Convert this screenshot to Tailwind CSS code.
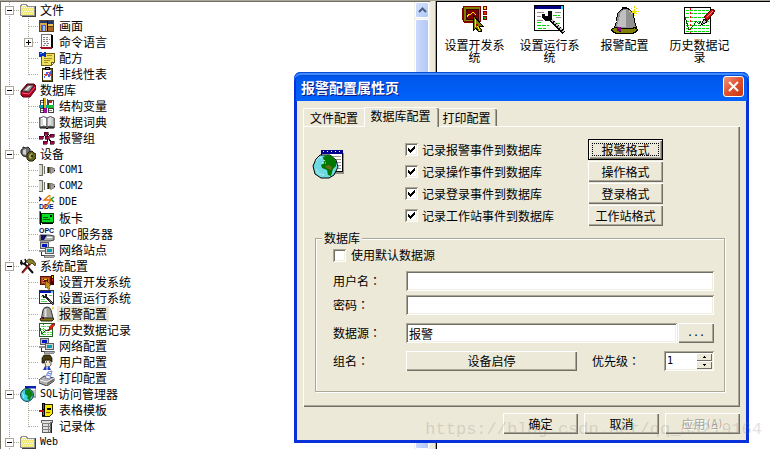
<!DOCTYPE html>
<html lang="zh-CN">
<head>
    <meta charset="UTF-8">
    <meta name="viewport" content="width=device-width, initial-scale=1.0">
    <title>报警配置属性页</title>
    <script src="https://cdn.jsdelivr.net/npm/@tailwindcss/browser@4"></script>
    <script>
        document.addEventListener("DOMContentLoaded", () => {
            const tree = [
                { name: "文件", icon: "folder", children: [
                    { name: "画面", icon: "picture" },
                    { name: "命令语言", icon: "script", closed: true },
                    { name: "配方", icon: "recipe" },
                    { name: "非线性表", icon: "clipboard" }
                ] },
                { name: "数据库", icon: "redbook", children: [
                    { name: "结构变量", icon: "struct" },
                    { name: "数据词典", icon: "openbook" },
                    { name: "报警组", icon: "group" }
                ] },
                { name: "设备", icon: "gears", children: [
                    { name: "COM1", icon: "plug" },
                    { name: "COM2", icon: "plug" },
                    { name: "DDE", icon: "dde" },
                    { name: "板卡", icon: "card" },
                    { latin: "OPC", name: "服务器", icon: "opc" },
                    { name: "网络站点", icon: "network" }
                ] },
                { name: "系统配置", icon: "tools", children: [
                    { name: "设置开发系统", icon: "develop" },
                    { name: "设置运行系统", icon: "runtime" },
                    { name: "报警配置", icon: "bell", selected: true },
                    { name: "历史数据记录", icon: "history" },
                    { name: "网络配置", icon: "network" },
                    { name: "用户配置", icon: "user" },
                    { name: "打印配置", icon: "printer" }
                ] },
                { latin: "SQL", name: "访问管理器", icon: "globe", children: [
                    { name: "表格模板", icon: "template" },
                    { name: "记录体", icon: "record" }
                ] },
                { name: "Web", icon: "folder", children: [] }
            ];

            const list = document.getElementById("tree");
            const dots = 'stroke="#aca899" stroke-dasharray="1 1"';

            // 一格引导线:竖线、横线、展开框
            function guide(down, across, box) {
                let lines = "";
                if (down) lines += `<path d="M8.5 0V${down}" ${dots}/>`;
                if (across) lines += `<path d="M9 8.5H19" ${dots}/>`;
                if (box) {
                    lines += '<path d="M4.5 4.5h8v8h-8z" fill="#fff" stroke="#aca899"/><path d="M6 8.5h5" stroke="#000"/>';
                    if (box === "plus") lines += '<path d="M8.5 6v5" stroke="#000"/>';
                }
                return `<svg class="w-[19px] h-4 shrink-0" viewBox="0 0 19 16" fill="none" shape-rendering="crispEdges" aria-hidden="true">${lines}</svg>`;
            }

            function addRow(node, guides) {
                const row = document.createElement("li");
                row.className = "flex h-4 items-center";
                const pill = node.selected ? "bg-[#ece9d8]" : "";
                const ascii = /^[A-Za-z0-9]+$/.test(node.name);
                const latin = ascii ? node.name : node.latin || "";
                const text = ascii ? "" : node.name;
                row.innerHTML = guides +
                    `<svg class="size-4 shrink-0" aria-hidden="true"><use href="#${node.icon}"/></svg>` +
                    `<a href="#" class="ml-[2px] flex items-center px-[2px] leading-4 whitespace-nowrap ${pill}">` +
                    (latin ? `<span class="font-['DejaVu_Sans_Mono',monospace] text-[10px]">${latin}</span>` : "") +
                    `${text}</a>`;
                list.appendChild(row);
            }

            tree.forEach((parent) => {
                addRow(parent, guide(16, true, "minus"));
                parent.children.forEach((child, c) => {
                    const last = c === parent.children.length - 1;
                    addRow(child, guide(16, false) + guide(last ? 9 : 16, true, child.closed ? "plus" : ""));
                });
            });
        });
    </script>
</head>
<body class="h-screen overflow-hidden bg-[#ece9d8] font-['Noto_Sans_CJK_SC',sans-serif] text-[12px] leading-4 text-black">
    <!-- 图标 -->
    <svg class="hidden" aria-hidden="true">
        <symbol id="folder" viewBox="0 0 16 16" shape-rendering="crispEdges">
            <path d="M2 4h14v11H2z" fill="#404040"/><path d="M.5 4.500l1-2h5l1 2h7v9H.500z" fill="#f0e878" stroke="#909090"/>
            <path d="M2 5.500h12M3 7.500h11M2 9.500h12M3 11.500h11" stroke="#fffff0" stroke-dasharray="1 1"/><path d="M2 3.500h4" stroke="#fff"/>
        </symbol>
        <symbol id="picture" viewBox="0 0 16 16" shape-rendering="crispEdges">
            <path d="M0 2h15v12H0z" fill="#604020"/><path d="M1 3h13v3H1z" fill="#203870"/><path d="M1 5h7v8H1z" fill="#d8a848"/>
            <path d="M2 7h5v6H2z" fill="#4060e0"/><path d="M4 8h2v5H4z" fill="#a0c0ff"/><path d="M9 6h5v2H9z" fill="#e8c060"/><path d="M9 9h5v4H9z" fill="#a86828"/><path d="M8 3h1v10H8z" fill="#000"/>
        </symbol>
        <symbol id="script" viewBox="0 0 16 16" shape-rendering="crispEdges">
            <path d="M2.500.5h10v13h-10z" fill="#fff" stroke="#707070"/><path d="M12 1h2v13h-2z" fill="#000"/><path d="M1 13h12v2H2z" fill="#a01020"/>
            <path d="M4 3.500h6M4 5.500h7M4 7.500h5M5 9.500h6M4 11.500h5" stroke="#808080" stroke-dasharray="2 1"/>
        </symbol>
        <symbol id="recipe" viewBox="0 0 16 16" shape-rendering="crispEdges">
            <path d="M2.500 3.500h13v9l-3 3h-10z" fill="#f0e060" stroke="#706010"/><path d="M12 15v-3h3" fill="#fff" stroke="#706010"/>
            <path d="M0 2h3v1h2V2h2v5H5V6H3v1H0z" fill="#0030c0"/><path d="M1 3h2v1H1z" fill="#60a0ff"/><path d="M8 5.500h5M5 8.500h8M5 10.500h6M5 12.500h4" stroke="#a89020"/>
        </symbol>
        <symbol id="clipboard" viewBox="0 0 16 16" shape-rendering="crispEdges">
            <path d="M3 2h10v13H3z" fill="#706020" stroke="#302800"/><path d="M4 4h8v10H4z" fill="#fff"/><path d="M6 1h4v2H6z" fill="#909090" stroke="#000"/>
            <path d="M5 12l3-6 2 5 2-6" fill="none" stroke="#4060f0"/><path d="M5 8l2 2 3-4 2 4" fill="none" stroke="#e04040"/>
        </symbol>
        <symbol id="redbook" viewBox="0 0 16 16">
            <path d="M1 9L7 2h7l2 2v3l-6 8H3L1 13z" fill="#b00020" stroke="#500010"/><path d="M2 9l6-6h6l-5 7z" fill="#909090" stroke="#202020" stroke-width=".7"/>
            <path d="M5 8l4-4h2L7 8z" fill="#f0f0f0"/><path d="M2 11l7 1 6-7" fill="none" stroke="#f06080"/>
        </symbol>
        <symbol id="struct" viewBox="0 0 16 16" shape-rendering="crispEdges">
            <path d="M1 2h5v5H1zM9 2h5v5H9zM1 10h5v4H1zM9 10h5v4H9z" fill="#fff" stroke="#404040"/>
            <path d="M2 4h3M10 4h3M2 12h3M10 12h3" stroke="#808080"/><path d="M0 7h8v3H0z" fill="#00a0b0"/><path d="M8 7h7v3H8z" fill="#10c030"/>
            <path d="M5 0h2v10H5z" fill="#e0b000"/><path d="M5 10h3v5H5z" fill="#a010a0"/><path d="M10 3h3v2h-3z" fill="#d02020"/><path d="M4 0v15M8 1v6" stroke="#000" stroke-width=".7"/>
        </symbol>
        <symbol id="openbook" viewBox="0 0 16 16">
            <path d="M0 4h1v10h6l1 1 1-1h6V4" fill="#606060" stroke="#000"/><path d="M1 4q4-3 7 0v9q-3-2-7 0z" fill="#fff" stroke="#505050"/><path d="M15 4q-4-3-7 0v9q3-2 7 0z" fill="#e0e0e0" stroke="#505050"/>
            <path d="M3 5v6M13 5v6" stroke="#b0b0b0"/>
        </symbol>
        <symbol id="group" viewBox="0 0 16 16" shape-rendering="crispEdges">
            <path d="M8 4L3 7M8 4l5 3M8 4v8M9 8l4 5" stroke="#000"/><path d="M5 2h4v3H5zM0 6h4v3H0zM6 6h4v3H6zM11 4h4v3h-4zM4 11h4v3H4zM11 11h4v3h-4z" fill="#a00848" stroke="#300018" stroke-width=".6"/>
        </symbol>
        <symbol id="gears" viewBox="0 0 16 16">
            <path d="M1 4l2-1V1l3 1 2-1 2 2v6l-3 2-4-1-2-3z" fill="#707070" stroke="#202020"/><path d="M3 4l3-1v6L3 8z" fill="#d0d0d0"/>
            <path d="M7 8l2-2 3-1 2 2 2 1v4l-3 3H9l-2-2z" fill="#606020" stroke="#202000"/><path d="M9 9l3-2 1 3-2 3-2-1z" fill="#a8a060"/><path d="M11 9h2v2h-2z" fill="#303000"/>
        </symbol>
        <symbol id="plug" viewBox="0 0 16 16" shape-rendering="crispEdges">
            <path d="M0 2h4v12H0z" fill="#d8d8c8"/><path d="M0 2.500h4M0 13.500h4" stroke="#606058"/><path d="M3.500 2v12M5.500 4v8" stroke="#707068"/><path d="M4 4h1v8H4z" fill="#e8e8e0"/>
            <path d="M8 5h3v6H8z" fill="#807820"/><path d="M9.500 5v6" stroke="#302800"/><path d="M11 5h2v1h2v4h-2v1h-2z" fill="#a0a0a0" stroke="#606060" stroke-width=".6"/><path d="M15 8h1" stroke="#000"/>
        </symbol>
        <symbol id="dde" viewBox="0 0 16 16">
            <path d="M0 3l2 2-2 2" fill="none" stroke="#1010a0" stroke-width="1.400"/><path d="M15 3l-3 2 3 3" fill="none" stroke="#109030" stroke-width="1.400"/>
            <text x="0" y="15" font-family="Liberation Sans" font-size="7" font-weight="bold" fill="#101070">DDE</text>
            <path d="M11 1L5 6h7L5 15" fill="none" stroke="#e87000" stroke-width="1.300"/><path d="M11 1v6" stroke="#e0a000"/>
        </symbol>
        <symbol id="card" viewBox="0 0 16 16" shape-rendering="crispEdges">
            <path d="M0 1h2v13H0z" fill="#808080"/><path d="M1 2v13" stroke="#000"/><path d="M2.500 3.500h12v9h-12z" fill="#00e020" stroke="#004008"/>
            <path d="M4 7.500h5M4 9.500h7" stroke="#006010"/><path d="M11 5h2v2h-2z" fill="#000"/><path d="M3 13h11v1H3z" fill="#000"/>
        </symbol>
        <symbol id="opc" viewBox="0 0 16 16">
            <text x="0" y="7" font-family="Liberation Sans" font-size="7" font-weight="bold" fill="#101060">OPC</text>
            <path d="M1 9h9l5 1v4l-4 1H1z" fill="#b0b0b0" stroke="#404040"/><path d="M2 9h6l-3 5H2z" fill="#101060"/><path d="M8 11h5v1H8z" fill="#fff"/>
        </symbol>
        <symbol id="network" viewBox="0 0 16 16" shape-rendering="crispEdges">
            <path d="M1.500.5h8v6h-8z" fill="#c0c0c0" stroke="#606060"/><path d="M3 2h5v3H3z" fill="#0018c0"/><path d="M0 8h8v2H0z" fill="#909090"/><path d="M2 10v3h4" fill="none" stroke="#303030"/>
            <path d="M6.500 5.500h8v6h-8z" fill="#d0d0d0" stroke="#606060"/><path d="M8 7h5v3H8z" fill="#00a0b0"/><path d="M5 13h10v2H5z" fill="#b0b0b0" stroke="#404040" stroke-width=".6"/>
        </symbol>
        <symbol id="tools" viewBox="0 0 16 16">
            <path d="M13 15L4 5" stroke="#101010" stroke-width="2"/><path d="M1 2l1 3 2 1 2-2-1-3M0 4l2 3" fill="none" stroke="#101010" stroke-width="1.500"/>
            <path d="M2 15l8-9" stroke="#a02020" stroke-width="2"/><path d="M2 14l8-9" stroke="#000" stroke-width=".6"/><path d="M6 3l3-2 4 1 3 4-1 2-3-3-2 2z" fill="#88802c" stroke="#202000" stroke-width=".7"/>
        </symbol>
        <symbol id="develop" viewBox="0 0 16 16" shape-rendering="crispEdges">
            <path d="M1 2h10v8H1z" fill="#b04020" stroke="#601000"/><path d="M3 4h6v4H3z" fill="#600808" stroke="#e08040" stroke-width=".7"/><path d="M4 7l2-2 2 1" stroke="#f0d000" fill="none"/>
            <path d="M12 1h3v10h-3z" fill="#400"/><path d="M13 2h1v2h-1z" fill="#f0d000"/><path d="M13 5h1v2h-1z" fill="#f02020"/><path d="M7 7l5 4-2 1 1 3-2 0-1-2-2 1z" fill="#c09820" stroke="#604800" stroke-width=".6"/>
        </symbol>
        <symbol id="runtime" viewBox="0 0 16 16" shape-rendering="crispEdges">
            <path d="M.5.5h14v13H.500z" fill="#fff" stroke="#303030"/><path d="M1 1h11v2H1z" fill="#0018b0"/><path d="M12 1h2v2h-2z" fill="#60d0ff"/><path d="M2 6h3M2 9h4M10 5h3M2 11h6" stroke="#60d060"/>
            <path d="M4 5l1 2h2V4M6 6l9 9" fill="none" stroke="#202020" stroke-width="2"/><path d="M10 10l5 5" stroke="#909090" stroke-width=".8"/>
        </symbol>
        <symbol id="bell" viewBox="0 0 16 16">
            <path d="M1 13l2-2h10l2 2-2 2H2z" fill="#807010" stroke="#202000"/><path d="M2.500 12l1.500-8q1-3 4-3t4 3l2 8z" fill="#a0a098" stroke="#303030"/><path d="M6.500 3v8" stroke="#e0e0e0" stroke-width="2"/><path d="M3 11h2v2H3z" fill="#600060"/><path d="M13 1l2 1-2 1" stroke="#e0d020" fill="none"/>
        </symbol>
        <symbol id="history" viewBox="0 0 16 16" shape-rendering="crispEdges">
            <path d="M.5 1.500h13v13H.500z" fill="#fff" stroke="#206020"/><path d="M2 4.500h11M2 7.500h10M2 10.500h11M2 12.500h11" stroke="#60e060" stroke-dasharray="2 1"/><path d="M4 2v12" stroke="#e04040" stroke-dasharray="1 1"/>
            <path d="M1 6l2 6 4-4 2 1" stroke="#106010" fill="none"/><path d="M9 9l2-5 4-3 1 1-3 5z" fill="#e02010" stroke="#601010" stroke-width=".6"/>
        </symbol>
        <symbol id="user" viewBox="0 0 16 16">
            <path d="M5 6h7v5l-2 2H7z" fill="#f0e8d0" stroke="#202020" stroke-width=".7"/><path d="M3 9V4l2-3h6l2 3v4l-2-2H6l-1 3z" fill="#483c10" stroke="#100800" stroke-width=".7"/><path d="M7 8h1M10 8h1" stroke="#000"/><path d="M6 12l2 2 2-2 2 4H4z" fill="#1838c0"/><path d="M8 13v3" stroke="#e8f0ff"/>
        </symbol>
        <symbol id="printer" viewBox="0 0 16 16">
            <path d="M0 10l5-4 10 2v3l-7 5-8-3z" fill="#b0b0b0" stroke="#404040"/><path d="M1 10l7 2 7-4" fill="none" stroke="#f0f0f0"/><path d="M6 8l3-6 4-1-2 8z" fill="#f0f4ff" stroke="#6070b0" stroke-width=".8"/><path d="M9 3l3 1M8 5l3 1" stroke="#4060e0" stroke-width=".8"/><path d="M8 13l6-4v2l-6 4z" fill="#707070"/>
        </symbol>
        <symbol id="globe" viewBox="0 0 16 16">
            <path d="M6 1h10v10H6z" fill="#fff" stroke="#606060"/><path d="M5 0h11v2.500H5z" fill="#0820b0"/><path d="M12 5h3M12 7h3M12 9h3" stroke="#909090"/>
            <circle cx="7" cy="9" r="6.400" fill="#40d0e8" stroke="#103040"/><path d="M5 4l4-1 3 3 1 3-2 2-1 4-3-3 1-2-3-2z" fill="#108010"/><path d="M2 7l2 3-1 2" stroke="#a0f0f8" fill="none"/>
        </symbol>
        <symbol id="template" viewBox="0 0 16 16" shape-rendering="crispEdges">
            <path d="M3.500 2.500h10v9l-3 3h-7z" fill="#f8e800" stroke="#302800"/><path d="M7 10h4" fill="none" stroke="#706000"/><path d="M8 6h4v2H8z" fill="#000"/><path d="M3 1h3v13H3z" fill="#000"/><path d="M4 2h1v5H4z" fill="#e02020"/><path d="M4 9h1v4H4z" fill="#10a0a0"/><path d="M0 8h5v2H0z" fill="#b01010"/>
        </symbol>
        <symbol id="record" viewBox="0 0 16 16" shape-rendering="crispEdges">
            <path d="M2.500 2.500h11v2h-2v10h-8v-9l-1-1z" fill="#e0e0e0" stroke="#606060"/><path d="M3 5.500h9M3 8.500h9M3 11.500h9M9.500 5v9" stroke="#808080"/><path d="M12.500 5v10" stroke="#202020"/>
        </symbol>
    </svg>

    <div class="flex h-full border-t border-[#aca899]">
        <!-- 工程树 -->
        <aside class="flex w-[431px] shrink-0 overflow-hidden border-t border-r border-l border-t-[#716f64] border-r-[#f1efe2] border-l-[#716f64] bg-white">
            <ul id="tree" class="min-w-0 flex-1"></ul>
            <div class="flex w-4 flex-col gap-px bg-[#f3f1ea]">
                <button type="button" aria-label="向上滚动" class="mx-px flex h-4 shrink-0 items-center justify-center rounded-[2px] border border-white bg-linear-to-br from-[#d6e3ff] to-[#aec8f7]">
                    <svg class="h-[6px] w-[9px]" viewBox="0 0 9 6" fill="none" stroke="#4d6185" stroke-width="2"><path d="M1 5l3.500-3.500L8 5"/></svg>
                </button>
                <div class="mx-px flex-1 rounded-[2px] border border-white bg-linear-to-r from-[#cbdafd] to-[#b4c8f6]"></div>
            </div>
        </aside>
        <div class="w-[5px] shrink-0 border-r border-[#aca899] bg-[#ece9d8]"></div>

        <!-- 内容区 -->
        <main class="flex min-w-0 flex-1 items-start border-t border-l border-black bg-white pt-[3px]">
            <a href="#" class="flex w-[75px] flex-col items-center gap-[2px] text-center leading-3">
                <svg class="size-8" viewBox="0 0 32 32" shape-rendering="crispEdges" aria-hidden="true">
                    <path d="M4.500 1.500h17v15h-17z" fill="#808000" stroke="#800000"/><path d="M7 4h12v10H7z" fill="#800000" stroke="#400000"/><path d="M3.500 3v12M5 17.500h14" stroke="#800000"/>
                    <path d="M8 12l2-3h2l2-2 3 3" fill="none" stroke="#ffe000"/>
                    <path d="M24 1h4v4h-4zM24 6h4v4h-4zM24 11h4v4h-4z" fill="#800000"/><path d="M25 2h2v2h-2z" fill="#ffe000"/><path d="M25 7h2v2h-2z" fill="#ff2020"/><path d="M25 12h2v2h-2z" fill="#00c000"/>
                    <path d="M14 10l10 11h-4l3 5-3 1-3-4-3 3z" fill="#808000" stroke="#000"/><path d="M16 14v8l2-2 3 6" fill="none" stroke="#ffe000"/><path d="M17 19h2v2h-2z" fill="#c00000"/>
                </svg>
                <span class="w-[66px]">设置开发系统</span>
            </a>
            <a href="#" class="flex w-[75px] flex-col items-center gap-[2px] text-center leading-3">
                <svg class="size-8" viewBox="0 0 32 32" shape-rendering="crispEdges" aria-hidden="true">
                    <path d="M.5.5h29v25H.500z" fill="#fff" stroke="#000"/><path d="M1 1h26v3H1z" fill="#000080"/><path d="M27 1h2v3h-2z" fill="#00e0ff"/>
                    <path d="M3 7.500h7M21 7.500h6M3 15.500h6M3 11.500h4M22 12.500h5" stroke="#909090"/><path d="M3 20.500h12M4 23.500h8M19 10.500h7M3 17.500h5M22 18.500h5" stroke="#00e000" stroke-dasharray="4 1"/>
                    <path d="M8 9v4l3 3h5l2-3V6h-4v5h-3V9z" fill="#000"/><path d="M16 14l14 14" stroke="#000" stroke-width="4"/><path d="M18 15l12 12" stroke="#c0c0c0" stroke-width="1.500" stroke-dasharray="2 1"/>
                </svg>
                <span class="w-[66px]">设置运行系统</span>
            </a>
            <a href="#" class="flex w-[75px] flex-col items-center gap-[2px] text-center leading-3">
                <svg class="size-8" viewBox="0 0 32 32" shape-rendering="crispEdges" aria-hidden="true">
                    <path d="M2.500 24.500l5-3h16l5 3-1 2-4 2h-16l-4-2z" fill="#808000" stroke="#000"/><path d="M5.500 22.500l2-6 1-8 4-4 4-2 4 2 4 4 1 8 2 6-6 1h-10z" fill="#909090" stroke="#000"/>
                    <path d="M8 21l2-6 1-6 3-4h3v17h-7z" fill="#c0c0c0"/><path d="M13 2h5v2h-5z" fill="#000"/><path d="M8 22h4v4H8z" fill="#800080"/><path d="M10 26h2v1h-2z" fill="#400040"/>
                    <path d="M20 6h10M25 1v10M22 3l6 6M28 3l-6 6" stroke="#f0e000" stroke-dasharray="2 1"/>
                </svg>
                <span class="w-[66px]">报警配置</span>
            </a>
            <a href="#" class="flex w-[75px] flex-col items-center gap-[2px] text-center leading-3">
                <svg class="size-8" viewBox="0 0 32 32" shape-rendering="crispEdges" aria-hidden="true">
                    <path d="M.5 2.500h26v26H.500z" fill="#fff" stroke="#000"/><path d="M2 5.500h24M2 8.500h24M2 12.500h24M2 16.500h24M2 20.500h24M2 23.500h24M2 26.500h24" stroke="#00d800" stroke-dasharray="3 1"/>
                    <path d="M6.500 3v25" stroke="#ff0000" stroke-dasharray="2 2"/><path d="M1 12l4 13 5-5 2-4 3 3 2-3" fill="none" stroke="#006000"/>
                    <path d="M17 20l3-6 3 3z" fill="#c0c0c0" stroke="#000"/><path d="M20 12l8-8 3 2-8 10z" fill="#e01010" stroke="#600000"/><path d="M23 12l6-6" stroke="#ff9090"/>
                </svg>
                <span class="w-[66px]">历史数据记录</span>
            </a>
        </main>
    </div>

    <!-- 属性页对话框 -->
    <form role="dialog" aria-labelledby="dialog-title" class="absolute top-[72px] left-[294px] w-[455px] rounded-t-[7px] border-x-[3px] border-b-[3px] border-[#0831d9] bg-[#ece9d8]">
        <header class="-mx-[3px] flex h-[29px] items-center justify-between rounded-t-[7px] bg-linear-to-b from-[#0a3fc4] via-[#0058ee] via-20% to-[#0063fb] pr-[5px] pl-[7px] shadow-[inset_0_1px_#0a4bd8,inset_0_3px_#3a8cff,inset_2px_0_#0831d9,inset_-2px_0_#0831d9]">
            <h1 id="dialog-title" class="text-[14px] font-bold text-white [text-shadow:1px_1px_#0a1883]">报警配置属性页</h1>
            <button type="button" aria-label="关闭" class="flex size-[21px] items-center justify-center rounded-[3px] border border-white bg-linear-to-br from-[#ee9478] via-[#e0512c] to-[#c4360f]">
                <svg class="size-[11px]" viewBox="0 0 11 11" stroke="#fff" stroke-width="2"><path d="M1 1l9 9M10 1l-9 9"/></svg>
            </button>
        </header>

        <div class="px-[6px] pt-[6px] pb-[6px]">
            <div role="tablist" class="relative z-10 -mb-px flex items-end">
                <button type="button" role="tab" class="mb-px h-[18px] w-[61px] rounded-tl-[2px] border-t border-l border-white leading-4">文件配置</button>
                <button type="button" role="tab" aria-selected="true" class="h-5 w-[75px] rounded-t-[2px] border-t border-l border-white bg-[#ece9d8] pr-[3px] pb-1 leading-4 shadow-[inset_-1px_0_#716f64,inset_-2px_0_#aca899]">数据库配置</button>
                <button type="button" role="tab" class="mb-px h-[18px] w-[58px] rounded-tr-[2px] border-t border-white pr-[3px] leading-4 shadow-[inset_-1px_0_#716f64,inset_-2px_0_#aca899]">打印配置</button>
            </div>

            <section class="border-t border-l border-white pr-[2px] pb-[15px] shadow-[inset_-1px_-1px_#716f64,inset_-2px_-2px_#aca899]">
                <div class="flex pt-3">
                    <div class="w-[101px] pt-[10px] pl-[8px]">
                        <svg class="size-8" viewBox="0 0 32 32" aria-hidden="true">
                            <path d="M11 4h22v21H11z" fill="#909080"/><path d="M9.500 2.500h21v20h-21z" fill="#fff" stroke="#000" shape-rendering="crispEdges"/><path d="M9 1h22v4H9z" fill="#000090"/><path d="M11 2.500h19" stroke="#fff" stroke-dasharray="1 3"/>
                            <path d="M12 7.500h17M24 10.500h5M25 13.500h4M26 16.500h3M26 19.500h3" stroke="#909090" shape-rendering="crispEdges"/>
                            <path d="M8 6h10l6 5 2 7-4 8-5 3H9l-6-4-2-8 3-7z" fill="#70d8e0" stroke="#000"/>
                            <path d="M11 8l5-2 4 1 4 5v5l-3 3-2 7-3-1-1-5-5-2-1-3 3-2z" fill="#007800"/><path d="M13 17l4-1 3 2-1 3-3-1z" fill="#706818"/><path d="M4 12l3-4 3 1M4 20l3 5 5 1M11 11l3 1M10 14h4" fill="none" stroke="#c0f8f8" stroke-dasharray="2 1"/>
                        </svg>
                    </div>
                    <div class="flex w-[183px] flex-col gap-px">
                        <label class="flex h-[21px] items-center gap-1">
                            <span class="grid"><input type="checkbox" checked class="peer size-[13px] appearance-none bg-white shadow-[inset_1px_1px_#aca899,inset_-1px_-1px_#fff,inset_2px_2px_#716f64,inset_-2px_-2px_#f1efe2] [grid-area:1/1]"><svg class="pointer-events-none hidden size-[13px] peer-checked:block [grid-area:1/1]" viewBox="0 0 13 13" shape-rendering="crispEdges"><path d="M3 5v3l2 2 5-5V2L5 7z"/></svg></span>
                            记录报警事件到数据库
                        </label>
                        <label class="flex h-[21px] items-center gap-1">
                            <span class="grid"><input type="checkbox" checked class="peer size-[13px] appearance-none bg-white shadow-[inset_1px_1px_#aca899,inset_-1px_-1px_#fff,inset_2px_2px_#716f64,inset_-2px_-2px_#f1efe2] [grid-area:1/1]"><svg class="pointer-events-none hidden size-[13px] peer-checked:block [grid-area:1/1]" viewBox="0 0 13 13" shape-rendering="crispEdges"><path d="M3 5v3l2 2 5-5V2L5 7z"/></svg></span>
                            记录操作事件到数据库
                        </label>
                        <label class="flex h-[21px] items-center gap-1">
                            <span class="grid"><input type="checkbox" checked class="peer size-[13px] appearance-none bg-white shadow-[inset_1px_1px_#aca899,inset_-1px_-1px_#fff,inset_2px_2px_#716f64,inset_-2px_-2px_#f1efe2] [grid-area:1/1]"><svg class="pointer-events-none hidden size-[13px] peer-checked:block [grid-area:1/1]" viewBox="0 0 13 13" shape-rendering="crispEdges"><path d="M3 5v3l2 2 5-5V2L5 7z"/></svg></span>
                            记录登录事件到数据库
                        </label>
                        <label class="flex h-[21px] items-center gap-1">
                            <span class="grid"><input type="checkbox" checked class="peer size-[13px] appearance-none bg-white shadow-[inset_1px_1px_#aca899,inset_-1px_-1px_#fff,inset_2px_2px_#716f64,inset_-2px_-2px_#f1efe2] [grid-area:1/1]"><svg class="pointer-events-none hidden size-[13px] peer-checked:block [grid-area:1/1]" viewBox="0 0 13 13" shape-rendering="crispEdges"><path d="M3 5v3l2 2 5-5V2L5 7z"/></svg></span>
                            记录工作站事件到数据库
                        </label>
                    </div>
                    <div class="flex w-[75px] flex-col gap-px">
                        <button type="button" class="h-[21px] border border-black p-[3px] leading-3 shadow-[inset_1px_1px_#fff,inset_-1px_-1px_#716f64,inset_-2px_-2px_#aca899]"><span class="flex h-full items-center justify-center border border-dotted border-black">报警格式</span></button>
                        <button type="button" class="h-[21px] shadow-[inset_1px_1px_#fff,inset_-1px_-1px_#716f64,inset_-2px_-2px_#aca899]">操作格式</button>
                        <button type="button" class="h-[21px] shadow-[inset_1px_1px_#fff,inset_-1px_-1px_#716f64,inset_-2px_-2px_#aca899]">登录格式</button>
                        <button type="button" class="h-[21px] shadow-[inset_1px_1px_#fff,inset_-1px_-1px_#716f64,inset_-2px_-2px_#aca899]">工作站格式</button>
                    </div>
                </div>

                <fieldset class="mt-[5px] mr-[13px] ml-[11px] min-w-0 border border-[#aca899] shadow-[inset_1px_1px_#fff,1px_1px_#fff]">
                    <legend class="ml-[6px] bg-[#ece9d8] px-[2px] leading-[14px]">数据库</legend>
                    <div class="pr-[10px] pb-[19px] pl-[17px]">
                        <label class="flex h-5 items-center gap-[5px]">
                            <input type="checkbox" class="size-[13px] appearance-none bg-white shadow-[inset_1px_1px_#aca899,inset_-1px_-1px_#fff,inset_2px_2px_#716f64,inset_-2px_-2px_#f1efe2]">
                            使用默认数据源
                        </label>
                        <div class="mt-[6px] flex h-5 items-center">
                            <label for="user-name" class="w-[73px]">用户名<span class="font-['Noto_Sans_CJK_TC',sans-serif]" lang="zh-TW">：</span></label>
                            <input id="user-name" type="text" class="h-full min-w-0 flex-1 bg-white px-[3px] shadow-[inset_1px_1px_#aca899,inset_-1px_-1px_#fff,inset_2px_2px_#716f64,inset_-2px_-2px_#f1efe2]">
                        </div>
                        <div class="mt-1 flex h-5 items-center">
                            <label for="password" class="w-[73px]">密码<span class="font-['Noto_Sans_CJK_TC',sans-serif]" lang="zh-TW">：</span></label>
                            <input id="password" type="password" class="h-full min-w-0 flex-1 bg-white px-[3px] shadow-[inset_1px_1px_#aca899,inset_-1px_-1px_#fff,inset_2px_2px_#716f64,inset_-2px_-2px_#f1efe2]">
                        </div>
                        <div class="mt-2 flex h-5 items-center">
                            <label for="source" class="w-[73px]">数据源<span class="font-['Noto_Sans_CJK_TC',sans-serif]" lang="zh-TW">：</span></label>
                            <input id="source" type="text" value="报警" class="mr-px h-full min-w-0 flex-1 bg-white px-[3px] leading-4 shadow-[inset_1px_1px_#aca899,inset_-1px_-1px_#fff,inset_2px_2px_#716f64,inset_-2px_-2px_#f1efe2]">
                            <button type="button" class="h-full w-9 font-['DejaVu_Sans_Mono',monospace] text-[10px] shadow-[inset_1px_1px_#fff,inset_-1px_-1px_#716f64,inset_-2px_-2px_#aca899]">...</button>
                        </div>
                        <div class="mt-[7px] flex h-[22px] items-center">
                            <label for="group-name" class="w-[73px]">组名<span class="font-['Noto_Sans_CJK_TC',sans-serif]" lang="zh-TW">：</span></label>
                            <button id="group-name" type="button" class="h-5 w-[171px] shadow-[inset_1px_1px_#fff,inset_-1px_-1px_#716f64,inset_-2px_-2px_#aca899]">设备启停</button>
                            <label for="priority" class="ml-[15px] flex-1">优先级<span class="font-['Noto_Sans_CJK_TC',sans-serif]" lang="zh-TW">：</span></label>
                            <div class="flex h-5 w-[50px] bg-white p-[2px] shadow-[inset_1px_1px_#aca899,inset_-1px_-1px_#fff,inset_2px_2px_#716f64,inset_-2px_-2px_#f1efe2]">
                                <input id="priority" type="text" value="1" class="min-w-0 flex-1 pl-[1px] font-['DejaVu_Sans_Mono',monospace] text-[10px]">
                                <div class="flex w-4 flex-col bg-[#ece9d8]">
                                    <button type="button" aria-label="增加" class="flex flex-1 items-center justify-center shadow-[inset_1px_1px_#fff,inset_-1px_-1px_#716f64]"><svg class="h-[2px] w-[3px]" viewBox="0 0 3 2" shape-rendering="crispEdges"><path d="M1 0h1v1h1v1H0V1h1z"/></svg></button>
                                    <button type="button" aria-label="减少" class="flex flex-1 items-center justify-center shadow-[inset_1px_1px_#fff,inset_-1px_-1px_#716f64]"><svg class="h-[2px] w-[3px]" viewBox="0 0 3 2" shape-rendering="crispEdges"><path d="M0 0h3v1H2v1H1V1H0z"/></svg></button>
                                </div>
                            </div>
                        </div>
                    </div>
                </fieldset>
            </section>

            <footer class="flex justify-end gap-[6px] pt-[6px]">
                <button type="submit" class="h-[21px] w-[75px] shadow-[inset_1px_1px_#fff,inset_-1px_-1px_#716f64,inset_-2px_-2px_#aca899]">确定</button>
                <button type="button" class="h-[21px] w-[75px] shadow-[inset_1px_1px_#fff,inset_-1px_-1px_#716f64,inset_-2px_-2px_#aca899]">取消</button>
                <button type="button" disabled class="flex h-[21px] w-[75px] items-center justify-center text-[#aca899] shadow-[inset_1px_1px_#fff,inset_-1px_-1px_#716f64,inset_-2px_-2px_#aca899] [text-shadow:1px_1px_#fff]">应用<span class="font-['DejaVu_Sans_Mono',monospace] text-[10px]">(<u>A</u>)</span></button>
            </footer>
        </div>
    </form>

    <p class="pointer-events-none absolute right-2 bottom-[9px] font-['Liberation_Mono',monospace] text-[17px] leading-5 text-[#808080]/25">https://blog.csdn.net/qq_33219164</p>
</body>
</html>
